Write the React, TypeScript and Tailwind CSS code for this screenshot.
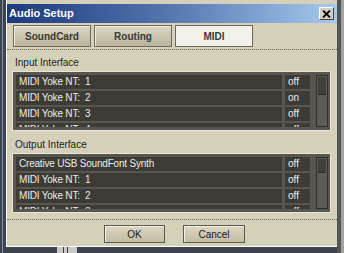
import React from 'react';

const inputs = [
  { name: 'MIDI Yoke NT:  1', state: 'off' },
  { name: 'MIDI Yoke NT:  2', state: 'on' },
  { name: 'MIDI Yoke NT:  3', state: 'off' },
  { name: 'MIDI Yoke NT:  4', state: 'off' },
];

const outputs = [
  { name: 'Creative USB SoundFont Synth', state: 'off' },
  { name: 'MIDI Yoke NT:  1', state: 'off' },
  { name: 'MIDI Yoke NT:  2', state: 'off' },
  { name: 'MIDI Yoke NT:  3', state: 'off' },
];

function PortList({ rows, thumb }: { rows: { name: string; state: string }[]; thumb: string }) {
  return (
    <div className="ml-[5px] w-[319px] h-[60px] border border-[#e9e6d8] bg-[#57564f] p-[3px] pr-[2px] flex">
      <div className="w-[294px] h-[52px] overflow-hidden flex flex-col gap-[2px]">
        {rows.map((r, i) => (
          <div key={i} className="flex gap-[3px] h-[14px] shrink-0">
            <div className="w-[266px] bg-[#3c3b35] text-[#ececec] pl-[3px] leading-[14px] text-[10px] tracking-[-0.2px] whitespace-pre">
              {r.name}
            </div>
            <div className="w-[25px] bg-[#3c3b35] text-[#ececec] pl-[3px] leading-[14px] text-[10px]">
              {r.state}
            </div>
          </div>
        ))}
      </div>
      {/* scrollbar */}
      <div className="ml-[6px] w-[12px] h-[52px] border border-[#2f2e29] bg-[#5d5c54] p-[1px]">
        <div className={`w-full ${thumb} bg-[#403f39] border-b border-[#2f2e29]`} />
      </div>
    </div>
  );
}

export default function App() {
  return (
    <div className="w-[344px] h-[253px] bg-[#3d444e] flex overflow-hidden font-['Liberation_Sans',Arial,sans-serif]">
      {/* left backdrop */}
      <div className="w-[6px] h-full flex">
        <div className="ml-[2px] w-[1px] h-full bg-[#7d93ae]" />
      </div>

      <div className="flex flex-col">
        {/* dialog */}
        <div className="w-[331px] h-[247px] bg-[#d5d0b9] border-l border-b border-white pt-[4px] flex flex-col">
          {/* title bar */}
          <div className="h-[19px] bg-gradient-to-r from-[#1b3a7e] via-[#5777b0] to-[#a6caee] flex items-center justify-between pl-[2px] pr-[3px]">
            <span className="text-white font-bold text-[11px] leading-none">Audio Setup</span>
            <div className="w-[15px] h-[13px] bg-[#d4d0c8] border border-t-white border-l-white border-r-[#404040] border-b-[#404040] flex items-center justify-center">
              <svg width="9" height="8" viewBox="0 0 9 8">
                <path d="M1 0.5 L8 7.5 M8 0.5 L1 7.5" stroke="#000" strokeWidth="1.8" />
              </svg>
            </div>
          </div>

          {/* tabs */}
          <div className="mt-[2px] pl-[6px] flex gap-[3px]">
            {['SoundCard', 'Routing'].map((t) => (
              <div
                key={t}
                className="w-[78px] h-[22px] border border-[#6e6a5a] bg-gradient-to-b from-[#dcd8c6] to-[#b9b39b] shadow-[inset_1px_1px_0_#efece0] flex items-center justify-center text-[10px] font-bold text-[#3b3a35]"
              >
                {t}
              </div>
            ))}
            <div className="w-[78px] h-[22px] border border-[#6e6a5a] bg-[#f2f1ec] flex items-center justify-center text-[10px] font-bold text-[#3b3a35]">
              MIDI
            </div>
          </div>

          <div className="mt-[2px] border-t border-dotted border-[#6b6a60]" />

          <div className="mt-[7px] ml-[8px] h-[12px] leading-[12px] text-[10px] text-[#1e1e1e]">Input Interface</div>
          <div className="mt-[2px]">
            <PortList rows={inputs} thumb="h-[18px]" />
          </div>

          <div className="mt-[8px] ml-[8px] h-[12px] leading-[12px] text-[10px] text-[#1e1e1e]">Output Interface</div>
          <div className="mt-[2px]">
            <PortList rows={outputs} thumb="h-[14px]" />
          </div>

          <div className="mt-[6px] border-t border-dotted border-[#6b6a60]" />

          <div className="mt-[5px] pl-[97px] flex gap-[18px]">
            <div className="w-[61px] h-[18px] border border-[#5e5a4c] bg-gradient-to-b from-[#dcd7c3] to-[#c2bca4] shadow-[inset_1px_1px_0_#f2efe4] flex items-center justify-center text-[10px] text-[#1a1a1a]">
              OK
            </div>
            <div className="w-[62px] h-[18px] border border-[#5e5a4c] bg-gradient-to-b from-[#dcd7c3] to-[#c2bca4] shadow-[inset_1px_1px_0_#f2efe4] flex items-center justify-center text-[10px] text-[#1a1a1a]">
              Cancel
            </div>
          </div>
        </div>

        {/* strip below dialog */}
        <div className="h-[6px] flex">
          <div className="ml-[51px] w-[20px] h-full bg-[#c9c9c5] flex gap-[3px] pl-[6px]">
            <div className="w-[1px] h-full bg-[#3a3a3a]" />
            <div className="w-[1px] h-full bg-[#3a3a3a]" />
          </div>
        </div>
      </div>

      {/* right backdrop */}
      <div className="w-[4px] h-full bg-[#555555]" />
      <div className="w-[3px] h-full bg-[#a3a3a3]" />
    </div>
  );
}
